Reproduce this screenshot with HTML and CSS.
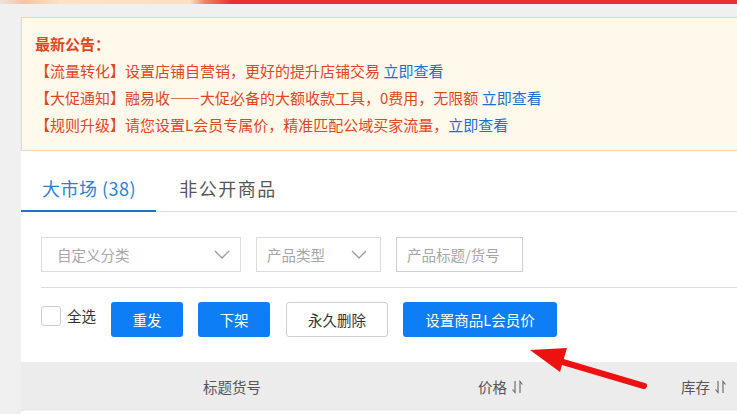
FILE: index.html
```html
<!DOCTYPE html>
<html lang="zh-CN">
<head>
    <meta charset="UTF-8">
    <meta name="viewport" content="width=device-width, initial-scale=1.0">
    <title>商品管理</title>
    <link rel="stylesheet" href="styles.css">
</head>
<body>
    <div class="banner"></div>

    <div class="main">
        <div class="notice">
            <div class="notice-title">最新公告：</div>
            <p>【流量转化】设置店铺自营销，更好的提升店铺交易 <a href="#">立即查看</a></p>
            <p>【大促通知】融易收——大促必备的大额收款工具，0费用，无限额 <a href="#">立即查看</a></p>
            <p>【规则升级】请您设置L会员专属价，精准匹配公域买家流量，<a href="#">立即查看</a></p>
        </div>

        <div class="panel">
            <div class="tabs">
                <div class="tab active">大市场 (38)</div>
                <div class="tab">非公开商品</div>
            </div>

            <div class="filters">
                <div class="select select-wide">
                    <span>自定义分类</span>
                    <svg class="chevron" width="16" height="9" viewBox="0 0 16 9"><polyline points="1,1 8,8 15,1" fill="none" stroke="#9a9a9a" stroke-width="1.3"/></svg>
                </div>
                <div class="select select-small">
                    <span>产品类型</span>
                    <svg class="chevron" width="16" height="9" viewBox="0 0 16 9"><polyline points="1,1 8,8 15,1" fill="none" stroke="#9a9a9a" stroke-width="1.3"/></svg>
                </div>
                <input type="text" class="search-input" placeholder="产品标题/货号">
            </div>

            <div class="actions">
                <label class="check-all">
                    <span class="checkbox"></span>
                    <span>全选</span>
                </label>
                <button class="btn btn-primary btn-short">重发</button>
                <button class="btn btn-primary btn-short">下架</button>
                <button class="btn btn-default">永久删除</button>
                <button class="btn btn-primary btn-long">设置商品L会员价</button>
            </div>
        </div>

        <div class="table-head">
            <div class="col">标题货号</div>
            <div class="col">价格 <svg class="sort" width="13" height="14" viewBox="0 0 13 14"><path d="M4 1V12.5L1.5 9.5M9 13V1.5L11.5 4.5" fill="none" stroke="#666" stroke-width="1.1"/></svg></div>
            <div class="col col-end">库存 <svg class="sort" width="13" height="14" viewBox="0 0 13 14"><path d="M4 1V12.5L1.5 9.5M9 13V1.5L11.5 4.5" fill="none" stroke="#666" stroke-width="1.1"/></svg></div>
        </div>
        <div class="table-row"></div>
    </div>

    <!-- annotation arrow on top of the screenshot -->
    <svg class="pointer" width="737" height="414" viewBox="0 0 737 414">
        <line x1="556" y1="360" x2="644" y2="386" stroke="#ee1111" stroke-width="6" stroke-linecap="round"/>
        <polygon points="530,350 567,348 560,372" fill="#ee1111"/>
    </svg>
</body>
</html>
```

FILE: styles.css
```css
:root {
    --blue: #0d7ef5;
    --notice-text: #e3461c;
    --link: #1c6fd1;
    --border: #dcdcdc;
}

* {
    margin: 0;
    padding: 0;
    box-sizing: border-box;
    font-family: "Noto Sans CJK SC", "Liberation Sans", sans-serif;
}

html, body {
    overflow: hidden;
}

body {
    background: #f0f0f0;
    width: 737px;
    height: 414px;
    position: relative;
}

.banner {
    height: 4px;
    background: linear-gradient(90deg, #f1e2dc 0, #f3c4a2 24px, #fde2c4 60px, #fce0c2 190px, #f08462 205px, #e8302f 232px, #e8302f 100%);
}

.main {
    padding-left: 21px;
    padding-top: 13px;
}

.notice {
    background: #fffaec;
    border: 1px solid #f5d6ab;
    border-right: none;
    padding: 12px 13px 12px;
    color: var(--notice-text);
    font-size: 15px;
    line-height: 27px;
}

.notice-title {
    font-weight: bold;
}

.notice a {
    color: var(--link);
    text-decoration: none;
}

.panel {
    background: #fff;
    padding-bottom: 25px;
}

.tabs {
    display: flex;
    height: 61px;
    border-bottom: 1px solid #e2e2e2;
}

.tab {
    padding: 25px 21px 0;
    font-size: 18px;
    letter-spacing: 1.5px;
    line-height: 24px;
    color: #555;
}

.tab.active {
    color: #2a7fd4;
    letter-spacing: 0.5px;
    border-bottom: 2px solid #1f73c9;
    margin-bottom: -1px;
    padding-right: 20px;
}

.tab + .tab {
    padding-left: 23px;
}

.filters {
    display: flex;
    gap: 15px;
    margin: 25px 0 0 20px;
    padding-bottom: 15px;
    border-bottom: 1px solid #dddddd;
}

.select {
    height: 35px;
    border: 1px solid var(--border);
    display: flex;
    align-items: center;
    justify-content: space-between;
    font-size: 14.5px;
    color: #a6a6a6;
}

.select-wide {
    width: 200px;
    padding: 0 10px 0 15px;
}

.select-small {
    width: 125px;
    padding: 0 13px 0 10px;
}

.search-input {
    width: 127px;
    height: 35px;
    border: 1px solid #cfcfcf;
    padding: 0 10px;
    font-size: 14.5px;
    outline: none;
}

.search-input::placeholder {
    color: #a6a6a6;
}

.actions {
    display: flex;
    align-items: flex-start;
    gap: 15px;
    margin: 14px 0 0 20px;
}

.check-all {
    display: flex;
    align-items: center;
    gap: 6px;
    margin-top: 3px;
    font-size: 14.5px;
    color: #333;
}

.checkbox {
    width: 20px;
    height: 20px;
    border: 1px solid #cccccc;
    border-radius: 3px;
    background: #fff;
}

.btn {
    height: 35px;
    border-radius: 3px;
    font-size: 14.5px;
    border: none;
    cursor: pointer;
}

.btn-primary {
    background: var(--blue);
    color: #fff;
}

.btn-short {
    width: 72px;
}

.btn-default {
    width: 102px;
    background: #fff;
    border: 1px solid #cfcfcf;
    color: #333;
    margin-left: 1px;
}

.btn-long {
    width: 154px;
}

.table-head {
    display: grid;
    grid-template-columns: 422px 116px 1fr;
    height: 49px;
    align-items: center;
    background: #ececec;
    font-size: 14.5px;
    color: #555;
    text-align: center;
}

.col {
    display: flex;
    align-items: center;
    justify-content: center;
    gap: 4px;
}

.col-end {
    justify-content: flex-end;
    padding-right: 10px;
}

.table-row {
    height: 20px;
    background: #fff;
}

.pointer {
    position: absolute;
    left: 0;
    top: 0;
    pointer-events: none;
}
```
